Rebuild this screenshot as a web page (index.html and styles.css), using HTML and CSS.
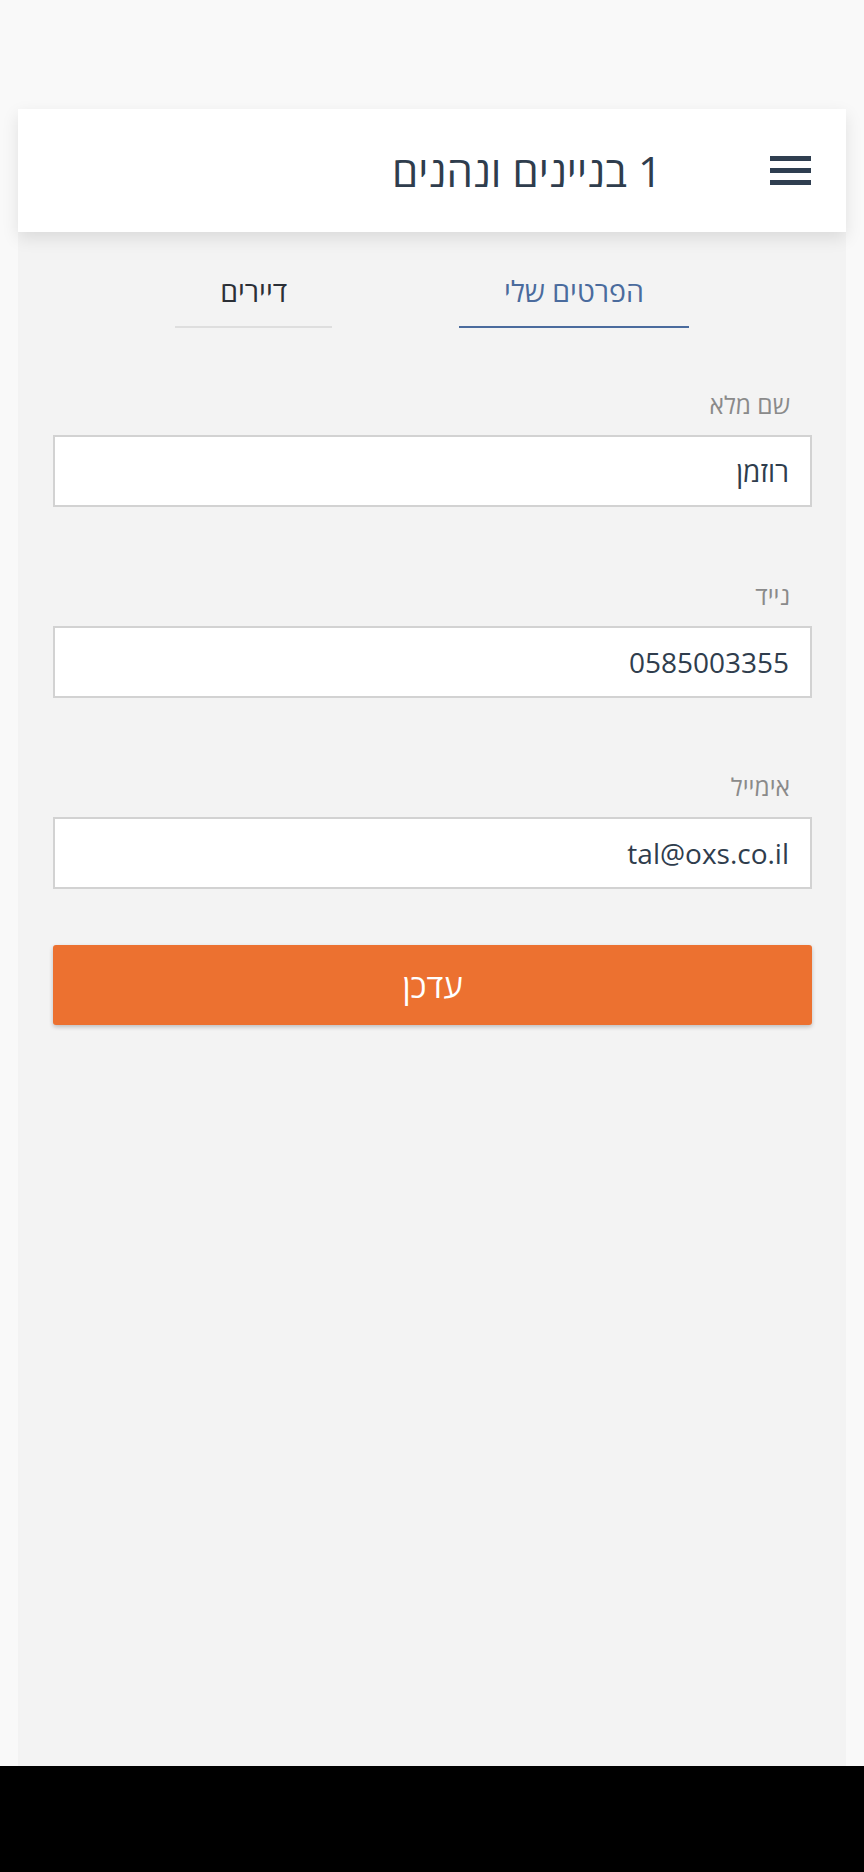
FILE: index.html
```html
<!DOCTYPE html>
<html lang="he" dir="rtl">
<head>
<meta charset="utf-8">
<title>1 בניינים ונהנים</title>
<link rel="stylesheet" href="styles.css">
</head>
<body>
<div class="status"></div>
<div class="app">
  <header class="topbar">
    <button class="menu" aria-label="תפריט"><span></span><span></span><span></span></button>
    <h1 class="title">1 בניינים ונהנים</h1>
  </header>
  <nav class="tabs">
    <div class="tab active">הפרטים שלי</div>
    <div class="tab">דיירים</div>
  </nav>
  <form class="form">
    <div class="field">
      <label class="label">שם מלא</label>
      <div class="input">רוזמן</div>
    </div>
    <div class="field">
      <label class="label">נייד</label>
      <div class="input">0585003355</div>
    </div>
    <div class="field">
      <label class="label">אימייל</label>
      <div class="input">tal@oxs.co.il</div>
    </div>
    <div class="btn">עדכן</div>
  </form>
</div>
<div class="navbar"></div>
</body>
</html>
```
FILE: styles.css
```css
* { box-sizing: border-box; }
html, body { margin: 0; padding: 0; }
body {
  background: #f9f9f9;
  font-family: "Open Sans", "DejaVu Sans", sans-serif;
  color: #2f3d4d;
  width: 864px;
  height: 1872px;
  overflow: hidden;
}
.status { height: 109px; }
.app {
  margin: 0 18px;
  height: 1657px;
  background: #f3f3f3;
}
.topbar {
  height: 123px;
  background: #fff;
  display: flex;
  align-items: center;
  padding-right: 35px;
  gap: 108px;
  box-shadow: 0 6px 16px rgba(0,0,0,0.10);
  position: relative;
}
.menu {
  width: 41px;
  height: 29px;
  padding: 0;
  border: 0;
  background: none;
  display: flex;
  flex-direction: column;
  justify-content: space-between;
}
.menu span {
  display: block;
  height: 5px;
  width: 100%;
  background: #2f3e50;
}
.title {
  margin: 0;
  font-size: 42px;
  font-weight: 400;
  line-height: 52px;
  color: #2f3d4d;
}
.tabs {
  display: flex;
  justify-content: center;
  gap: 127px;
  padding-top: 40px;
}
.tab {
  font-size: 28.5px;
  line-height: 38px;
  padding: 0 45px 16px;
  border-bottom: 2px solid #dedede;
  color: #2b2f36;
}
.tab.active {
  color: #4a6b9d;
  border-bottom-color: #4a6b9d;
}
.form {
  padding: 62px 34px 0 35px;
}
.field + .field { margin-top: 74px; }
.label {
  display: block;
  height: 30px;
  line-height: 30px;
  font-size: 24.5px;
  color: #8a8a8a;
  padding-right: 22px;
  margin-bottom: 15px;
}
.input {
  height: 72px;
  background: #fff;
  border: 2px solid #d2d2d2;
  padding: 0 21px;
  display: flex;
  align-items: center;
  font-size: 28px;
  color: #2f3d4d;
}
.btn {
  margin-top: 56px;
  height: 80px;
  background: #ec7130;
  border-radius: 3px;
  box-shadow: 0 2px 4px rgba(0,0,0,0.22);
  color: #fff;
  font-size: 33px;
  display: flex;
  align-items: center;
  justify-content: center;
}
.navbar {
  height: 106px;
  background: #000;
}
```
